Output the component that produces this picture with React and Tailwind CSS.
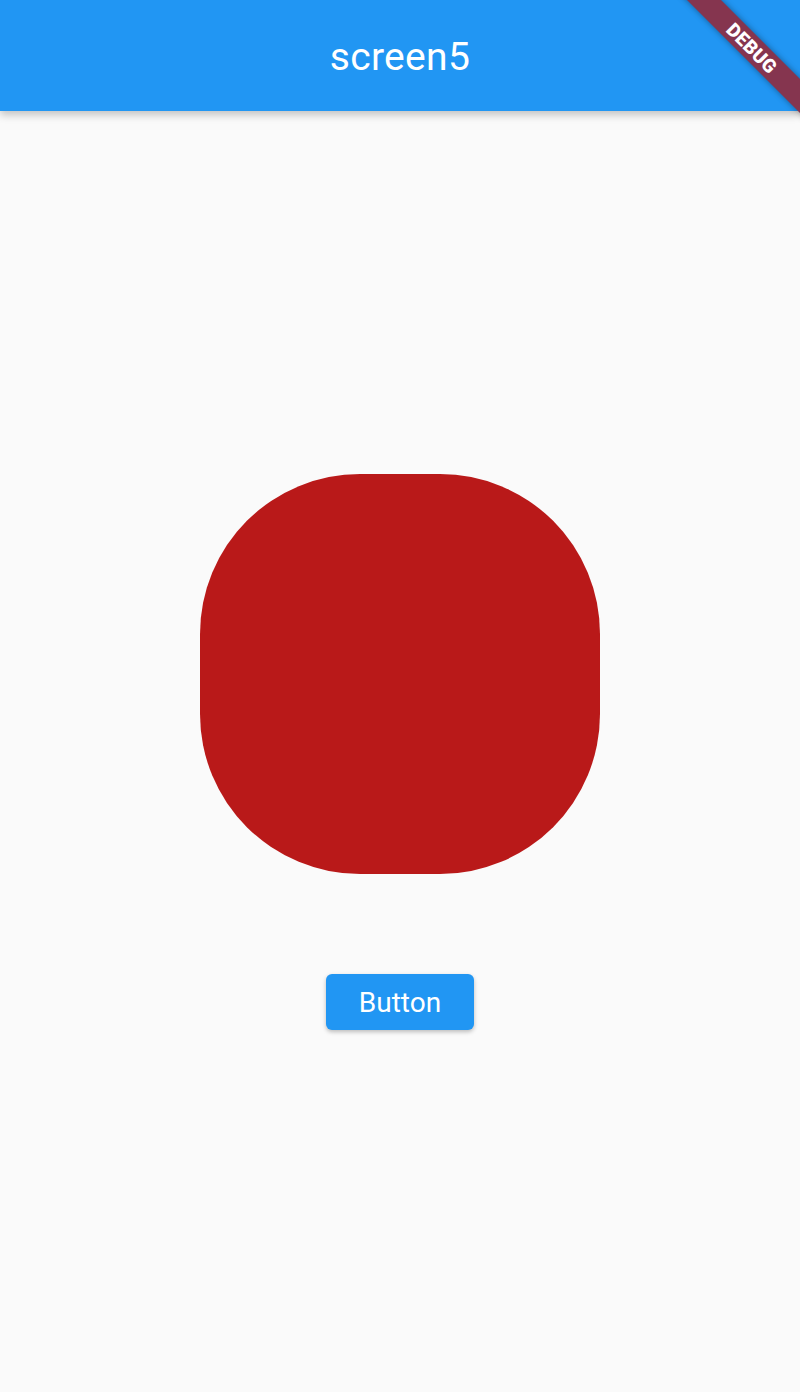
export default function App() {
  return (
    <div className="relative flex h-[1392px] w-[800px] flex-col overflow-hidden bg-[#fafafa]" style={{ fontFamily: "Roboto, 'Liberation Sans', sans-serif" }}>
      <header className="relative z-10 flex h-[111px] shrink-0 items-center justify-center bg-[#2196f3] pt-[4px] shadow-[0_4px_8px_rgba(0,0,0,0.22)]">
        <h1 className="text-[39px] font-normal leading-none tracking-[0.3px] text-white">screen5</h1>
      </header>
      <main className="flex flex-1 flex-col items-center justify-center gap-[100px]">
        <div className="h-[400px] w-[400px] rounded-[160px] bg-[#b91919]" />
        <button className="flex h-[56px] w-[148px] items-center justify-center rounded-[6px] bg-[#2196f3] pt-[2px] text-[28px] leading-none text-white shadow-[0_2px_4px_rgba(0,0,0,0.25)]">
          Button
        </button>
      </main>
      <div className="absolute left-[632px] top-[36px] z-20 flex h-[24px] w-[240px] rotate-45 items-center justify-center bg-[#85354f] shadow-[0_0_6px_rgba(0,0,0,0.4)]">
        <span className="text-[19px] font-black leading-none tracking-[0.3px] text-white">DEBUG</span>
      </div>
    </div>
  );
}
